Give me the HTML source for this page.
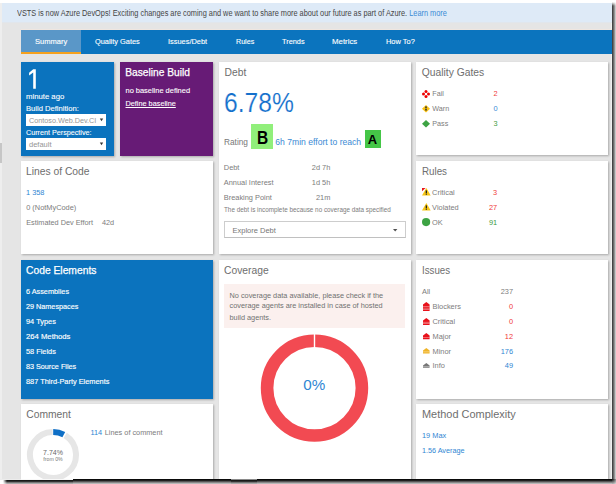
<!DOCTYPE html>
<html><head><meta charset="utf-8">
<style>
*{margin:0;padding:0;box-sizing:border-box}
html,body{width:616px;height:484px;overflow:hidden;background:#fff}
body{position:relative;font-family:"Liberation Sans",sans-serif;color:#555}
.a{position:absolute;white-space:nowrap;line-height:1}
#page{position:absolute;left:0;top:0;width:612px;height:479px;background:#e5e5e5;overflow:hidden}
.card{position:absolute;background:#fff;box-shadow:1px 1px 2px rgba(0,0,0,.26)}
svg{position:absolute;overflow:visible}
</style></head>
<body>
<div id="page">
<div style="position:absolute;left:0px;top:0px;width:612px;height:3px;background:#fff;"></div>
<div style="position:absolute;left:0px;top:3px;width:2px;height:476px;background:#eeeeee;"></div>
<div style="position:absolute;left:0px;top:143px;width:2px;height:20px;background:#c6c6c6;"></div>
<div style="position:absolute;left:611px;top:22px;width:1px;height:457px;background:#efefef;"></div>
<div style="position:absolute;left:2px;top:3px;width:610px;height:19px;background:#deeaf7;"></div>
<div style="position:absolute;left:2px;top:22px;width:610px;height:1px;background:#e1e6ec;"></div>
<div class="a" style="left:16.80px;top:9.49px;font-size:8.4px;color:#454545;transform:scaleX(0.8785);transform-origin:0 0;">VSTS is now Azure DevOps! Exciting changes are coming and we want to share more about our future as part of Azure. <span style="color:#3a8ad6">Learn more</span></div>
<div style="position:absolute;left:21px;top:29px;width:591px;height:1px;background:#efe6e0;"></div>
<div style="position:absolute;left:21px;top:30px;width:591px;height:24px;background:#0b74be;"></div>
<div style="position:absolute;left:21px;top:30px;width:60px;height:22px;background:#5a97c8;"></div>
<div style="position:absolute;left:21px;top:52px;width:60px;height:2px;background:#f5a11e;"></div>
<div class="a" style="left:34.70px;top:37.83px;font-size:8.0px;color:#fff;transform:scaleX(0.9437);transform-origin:0 0;-webkit-text-stroke:0.12px #fff">Summary</div>
<div class="a" style="left:94.70px;top:37.83px;font-size:8.0px;color:#fff;transform:scaleX(0.9244);transform-origin:0 0;-webkit-text-stroke:0.12px #fff">Quality Gates</div>
<div class="a" style="left:168.00px;top:37.83px;font-size:8.0px;color:#fff;transform:scaleX(0.9256);transform-origin:0 0;-webkit-text-stroke:0.12px #fff">Issues/Debt</div>
<div class="a" style="left:235.50px;top:37.83px;font-size:8.0px;color:#fff;transform:scaleX(0.8898);transform-origin:0 0;-webkit-text-stroke:0.12px #fff">Rules</div>
<div class="a" style="left:281.70px;top:37.83px;font-size:8.0px;color:#fff;transform:scaleX(0.9186);transform-origin:0 0;-webkit-text-stroke:0.12px #fff">Trends</div>
<div class="a" style="left:332.30px;top:37.83px;font-size:8.0px;color:#fff;transform:scaleX(0.9815);transform-origin:0 0;-webkit-text-stroke:0.12px #fff">Metrics</div>
<div class="a" style="left:385.50px;top:37.83px;font-size:8.0px;color:#fff;transform:scaleX(0.9296);transform-origin:0 0;-webkit-text-stroke:0.12px #fff">How To?</div>
<div class="card" style="left:21px;top:62px;width:93px;height:94px;background:#0b73be"></div>
<svg style="left:0;top:0" width="120" height="100"><path d="M33.2 69.2 L35.8 69.2 L35.8 88.7 L33.2 88.7 L33.2 72.6 L29.1 75.4 L29.1 72.8 Z" fill="#fff"/></svg>
<div class="a" style="left:26.00px;top:93.11px;font-size:7.9px;color:#fff;transform:scaleX(0.9799);transform-origin:0 0;-webkit-text-stroke:0.1px #fff">minute ago</div>
<div class="a" style="left:26.20px;top:105.48px;font-size:7.7px;color:#fff;transform:scaleX(0.9888);transform-origin:0 0;-webkit-text-stroke:0.1px #fff">Build Definition:</div>
<div style="position:absolute;left:26px;top:114px;width:80px;height:12px;background:#fff;"></div>
<div class="a" style="left:29.00px;top:116.57px;font-size:7.6px;color:#959595;transform:scaleX(0.9536);transform-origin:0 0;">Contoso.Web.Dev.CI</div>
<div class="a" style="left:26.20px;top:129.48px;font-size:7.7px;color:#fff;transform:scaleX(0.9347);transform-origin:0 0;-webkit-text-stroke:0.1px #fff">Current Perspective:</div>
<div style="position:absolute;left:26px;top:138px;width:80px;height:12px;background:#fff;"></div>
<div class="a" style="left:29.00px;top:140.85px;font-size:7.5px;color:#959595;">default</div>
<svg style="left:99px;top:118px" width="5" height="4"><path d="M0.8 0.6 L4.2 0.6 L2.5 3.2Z" fill="#333"/></svg>
<svg style="left:99px;top:142px" width="5" height="4"><path d="M0.8 0.6 L4.2 0.6 L2.5 3.2Z" fill="#333"/></svg>
<div class="card" style="left:120px;top:62px;width:93px;height:94px;background:#671b76"></div>
<div class="a" style="left:125.30px;top:68px;font-size:10.2px;color:#fff;-webkit-text-stroke:0.25px #fff">Baseline Build</div>
<div class="a" style="left:125.50px;top:86.59px;font-size:7.45px;color:#fff;-webkit-text-stroke:0.1px #fff">no baseline defined</div>
<div class="a" style="left:125.50px;top:100.02px;font-size:7.3px;color:#fff;text-decoration:underline;-webkit-text-stroke:0.1px #fff">Define baseline</div>
<div class="card" style="left:219px;top:62px;width:192px;height:192px"></div>
<div class="a" style="left:224.50px;top:68px;font-size:10.3px;color:#6e6e6e;">Debt</div>
<div class="a" style="left:223.80px;top:88.80px;font-size:28px;color:#1470cc;transform:scaleX(0.88);transform-origin:0 0;-webkit-text-stroke:0.2px #fff">6.78%</div>
<div class="a" style="left:224.00px;top:137.57px;font-size:8.3px;color:#777;">Rating</div>
<div style="position:absolute;left:250.5px;top:124px;width:22.5px;height:25px;background:#91ef7b;"></div>
<div class="a" style="left:256.60px;top:128.96px;font-size:18px;color:#000;font-weight:bold;transform:scaleX(0.86);transform-origin:0 0">B</div>
<div class="a" style="left:275.30px;top:137.72px;font-size:8.6px;color:#3b8ad4;">6h 7min effort to reach</div>
<div style="position:absolute;left:365px;top:130px;width:15.5px;height:17.5px;background:#45c647;"></div>
<div class="a" style="left:367.80px;top:132.90px;font-size:13px;color:#000;font-weight:bold">A</div>
<div class="a" style="left:223.80px;top:163.84px;font-size:7.4px;color:#7c7c7c;">Debt</div>
<div class="a" style="right:281.70px;top:163.84px;font-size:7.4px;color:#7c7c7c;">2d 7h</div>
<div class="a" style="left:223.80px;top:179.04px;font-size:7.4px;color:#7c7c7c;">Annual Interest</div>
<div class="a" style="right:281.70px;top:179.04px;font-size:7.4px;color:#7c7c7c;">1d 5h</div>
<div class="a" style="left:223.80px;top:194.24px;font-size:7.4px;color:#7c7c7c;">Breaking Point</div>
<div class="a" style="right:281.70px;top:194.24px;font-size:7.4px;color:#7c7c7c;">21m</div>
<div class="a" style="left:224.00px;top:206.84px;font-size:6.33px;color:#7c7c7c;">The debt is incomplete because no coverage data specified</div>
<div style="position:absolute;left:224px;top:221px;width:182px;height:16.5px;border:1px solid #cdcdcd;border-bottom-color:#c0c0c0;background:#fff"></div>
<div class="a" style="left:232.50px;top:226.85px;font-size:7.5px;color:#777;">Explore Debt</div>
<svg style="left:393px;top:228.5px" width="5" height="3"><path d="M0 0 L4.4 0 L2.2 2.6Z" fill="#505050"/></svg>
<div class="card" style="left:416px;top:62px;width:192px;height:93px"></div>
<div class="a" style="left:421.80px;top:68px;font-size:10.3px;color:#6e6e6e;">Quality Gates</div>
<div class="a" style="left:432.30px;top:90.31px;font-size:7.2px;color:#7c7c7c;">Fail</div>
<div class="a" style="right:114.40px;top:90.14px;font-size:7.4px;color:#f03a3a;">2</div>
<div class="a" style="left:432.30px;top:105.31px;font-size:7.2px;color:#7c7c7c;">Warn</div>
<div class="a" style="right:114.40px;top:105.14px;font-size:7.4px;color:#3a8ad6;">0</div>
<div class="a" style="left:432.30px;top:120.01px;font-size:7.2px;color:#7c7c7c;">Pass</div>
<div class="a" style="right:114.40px;top:119.84px;font-size:7.4px;color:#3c9a3c;">3</div>
<svg style="left:422px;top:89.5px" width="8" height="8"><g fill="#e00"><circle cx="4" cy="1.4" r="1.5"/><circle cx="1.5" cy="4" r="1.5"/><circle cx="6.5" cy="4" r="1.5"/><circle cx="4" cy="6.6" r="1.5"/></g></svg>
<svg style="left:422px;top:104.8px" width="8" height="8"><path d="M4 0 L8 3.7 L4 7.4 L0 3.7Z" fill="#fbc312"/><rect x="3.2" y="1.4" width="1.6" height="2" fill="#333"/><rect x="3.2" y="4" width="1.6" height="1.6" fill="#333"/></svg>
<svg style="left:422px;top:119.6px" width="8" height="8"><path d="M4 0 L8 3.7 L4 7.4 L0 3.7Z" fill="#3da343"/></svg>
<div class="card" style="left:21px;top:161px;width:192px;height:93px"></div>
<div class="a" style="left:26.00px;top:167px;font-size:10.3px;color:#6e6e6e;">Lines of Code</div>
<div class="a" style="left:26.40px;top:188.71px;font-size:7.9px;color:#2f86d3;transform:scaleX(0.9358);transform-origin:0 0;">1 358</div>
<div class="a" style="left:26.20px;top:204.04px;font-size:7.4px;color:#7c7c7c;">0 (NotMyCode)</div>
<div class="a" style="left:26.20px;top:218.82px;font-size:7.3px;color:#7c7c7c;">Estimated Dev Effort</div>
<div class="a" style="left:102.00px;top:218.82px;font-size:7.3px;color:#7c7c7c;">42d</div>
<div class="card" style="left:416px;top:161px;width:192px;height:93px"></div>
<div class="a" style="left:421.80px;top:167px;font-size:10.3px;color:#6e6e6e;transform:scaleX(0.9494);transform-origin:0 0">Rules</div>
<div class="a" style="left:432.10px;top:188.64px;font-size:7.4px;color:#7c7c7c;">Critical</div>
<div class="a" style="right:114.80px;top:188.64px;font-size:7.4px;color:#f03a3a;">3</div>
<div class="a" style="left:432.10px;top:203.74px;font-size:7.4px;color:#7c7c7c;">Violated</div>
<div class="a" style="right:114.80px;top:203.74px;font-size:7.4px;color:#f03a3a;">27</div>
<div class="a" style="left:432.10px;top:218.54px;font-size:7.4px;color:#7c7c7c;">OK</div>
<div class="a" style="right:114.80px;top:218.54px;font-size:7.4px;color:#3c9a3c;">91</div>
<svg style="left:421.6px;top:188.4px" width="9" height="8"><path d="M4.35 0 L8.7 7.6 L0 7.6Z" fill="#f7c614"/><rect x="3.7" y="2.4" width="1.3" height="2.6" fill="#222"/><rect x="3.7" y="5.5" width="1.3" height="1.2" fill="#222"/><path d="M0 0 L3.6 0 L0 3.2Z" fill="#e8161b"/></svg>
<svg style="left:421.6px;top:203.4px" width="9" height="8"><path d="M4.35 0 L8.7 7.6 L0 7.6Z" fill="#f7c614"/><rect x="3.7" y="2.4" width="1.3" height="2.6" fill="#222"/><rect x="3.7" y="5.5" width="1.3" height="1.2" fill="#222"/></svg>
<svg style="left:421.9px;top:218.2px" width="9" height="9"><circle cx="4.1" cy="4.1" r="4.1" fill="#3da343"/></svg>
<div class="card" style="left:21px;top:260px;width:192px;height:139px;background:#0b73be"></div>
<div class="a" style="left:26.00px;top:266px;font-size:10.3px;color:#fff;-webkit-text-stroke:0.25px #fff">Code Elements</div>
<div class="a" style="left:26.10px;top:288.38px;font-size:7.7px;color:#fff;transform:scaleX(0.9501);transform-origin:0 0;-webkit-text-stroke:0.15px #fff">6 Assemblies</div>
<div class="a" style="left:26.10px;top:303.48px;font-size:7.7px;color:#fff;transform:scaleX(0.9418);transform-origin:0 0;-webkit-text-stroke:0.15px #fff">29 Namespaces</div>
<div class="a" style="left:26.10px;top:318.28px;font-size:7.7px;color:#fff;transform:scaleX(0.9612);transform-origin:0 0;-webkit-text-stroke:0.15px #fff">94 Types</div>
<div class="a" style="left:26.10px;top:333.38px;font-size:7.7px;color:#fff;transform:scaleX(0.9996);transform-origin:0 0;-webkit-text-stroke:0.15px #fff">264 Methods</div>
<div class="a" style="left:26.10px;top:348.38px;font-size:7.7px;color:#fff;transform:scaleX(0.9570);transform-origin:0 0;-webkit-text-stroke:0.15px #fff">58 Fields</div>
<div class="a" style="left:26.10px;top:363.28px;font-size:7.7px;color:#fff;transform:scaleX(0.9384);transform-origin:0 0;-webkit-text-stroke:0.15px #fff">83 Source Files</div>
<div class="a" style="left:26.10px;top:378.08px;font-size:7.7px;color:#fff;transform:scaleX(0.9580);transform-origin:0 0;-webkit-text-stroke:0.15px #fff">887 Third-Party Elements</div>
<div class="card" style="left:219px;top:260px;width:192px;height:230px"></div>
<div class="a" style="left:224.00px;top:266px;font-size:10.3px;color:#6e6e6e;">Coverage</div>
<div style="position:absolute;left:224px;top:284px;width:181px;height:44px;background:#fbf0ee;"></div>
<div class="a" style="left:229.50px;top:291.60px;font-size:7.33px;color:#707070;">No coverage data available, please check if the</div>
<div class="a" style="left:229.50px;top:302.40px;font-size:7.33px;color:#707070;">coverage agents are installed in case of hosted</div>
<div class="a" style="left:229.50px;top:313.50px;font-size:7.33px;color:#707070;">build agents.</div>
<svg style="left:0;top:0" width="612" height="479"><circle cx="314.5" cy="388.1" r="47.400000000000006" fill="none" stroke="#f24a52" stroke-width="12.6"/><rect x="313.8" y="333.40000000000003" width="1.4" height="14.1" fill="#fff"/></svg>
<div class="a" style="left:303.20px;top:377.33px;font-size:15.2px;color:#2f86d3;">0%</div>
<div class="card" style="left:416px;top:260px;width:192px;height:139px"></div>
<div class="a" style="left:421.80px;top:266px;font-size:10.3px;color:#6e6e6e;transform:scaleX(0.9440);transform-origin:0 0">Issues</div>
<div class="a" style="left:422.00px;top:287.84px;font-size:7.4px;color:#7c7c7c;">All</div>
<div class="a" style="right:99.00px;top:287.84px;font-size:7.4px;color:#7c7c7c;">237</div>
<div class="a" style="left:432.50px;top:302.54px;font-size:7.4px;color:#7c7c7c;">Blockers</div>
<div class="a" style="right:99.00px;top:302.54px;font-size:7.4px;color:#f03a3a;">0</div>
<div class="a" style="left:432.50px;top:317.74px;font-size:7.4px;color:#7c7c7c;">Critical</div>
<div class="a" style="right:99.00px;top:317.74px;font-size:7.4px;color:#f03a3a;">0</div>
<div class="a" style="left:432.50px;top:332.74px;font-size:7.4px;color:#7c7c7c;">Major</div>
<div class="a" style="right:99.00px;top:332.74px;font-size:7.4px;color:#f03a3a;">12</div>
<div class="a" style="left:432.50px;top:347.54px;font-size:7.4px;color:#7c7c7c;">Minor</div>
<div class="a" style="right:99.00px;top:347.54px;font-size:7.4px;color:#2f86d3;">176</div>
<div class="a" style="left:432.50px;top:362.44px;font-size:7.4px;color:#7c7c7c;">Info</div>
<div class="a" style="right:99.00px;top:362.44px;font-size:7.4px;color:#2f86d3;">49</div>
<svg style="left:422.8px;top:301.9px" width="7" height="8.9"><path d="M3.3 0 L6.6 2.6 L6.6 8.9 L0 8.9 L0 2.6Z" fill="#e8121b"/><rect x="0" y="4.2" width="6.6" height="0.6" fill="#fff" opacity="0.6"/><rect x="0" y="5.8" width="6.6" height="0.6" fill="#fff" opacity="0.6"/><rect x="0" y="7.4" width="6.6" height="0.6" fill="#fff" opacity="0.6"/></svg>
<svg style="left:422.8px;top:317.8px" width="7" height="6.9"><path d="M3.3 0 L6.6 2.6 L6.6 6.9 L0 6.9 L0 2.6Z" fill="#e8121b"/><rect x="0" y="3.9" width="6.6" height="0.6" fill="#fff" opacity="0.6"/><rect x="0" y="5.4" width="6.6" height="0.6" fill="#fff" opacity="0.6"/></svg>
<svg style="left:422.8px;top:332.9px" width="7" height="6.3"><path d="M3.3 0 L6.6 2.6 L6.6 6.3 L0 6.3 L0 2.6Z" fill="#e8121b"/><rect x="0" y="4.3" width="6.6" height="0.6" fill="#fff" opacity="0.6"/></svg>
<svg style="left:422.8px;top:347.8px" width="7" height="5.5"><path d="M3.3 0 L6.6 2.6 L6.6 5.5 L0 5.5 L0 2.6Z" fill="#f0b429"/><rect x="0" y="3.6" width="6.6" height="0.6" fill="#fff" opacity="0.6"/></svg>
<svg style="left:422.8px;top:362.7px" width="7" height="4.7"><path d="M3.3 0 L6.6 2.6 L6.6 4.7 L0 4.7 L0 2.6Z" fill="#777"/><rect x="0" y="3.2" width="6.6" height="0.6" fill="#fff" opacity="0.6"/></svg>
<div class="card" style="left:21px;top:404px;width:192px;height:90px"></div>
<div class="a" style="left:26.30px;top:410px;font-size:10.3px;color:#6e6e6e;">Comment</div>
<svg style="left:0;top:0" width="612" height="479"><path d="M65.19 435.39 A23.0 23.0 0 1 1 52.60 431.90" fill="none" stroke="#e6e6e6" stroke-width="6"/><path d="M53.20 431.90 A23.0 23.0 0 0 1 63.80 434.59" fill="none" stroke="#0f6fc6" stroke-width="6"/></svg>
<div class="a" style="left:53.00px;top:448.77px;font-size:7px;color:#666;transform:translateX(-50%)">7.74%</div>
<div class="a" style="left:53.00px;top:457.40px;font-size:5.2px;color:#777;transform:translateX(-50%)">from 0%</div>
<div class="a" style="left:90.50px;top:428.98px;font-size:7.35px;color:#2f86d3;">114</div>
<div class="a" style="left:104.80px;top:429.00px;font-size:7.32px;color:#7c7c7c;">Lines of comment</div>
<div class="card" style="left:416px;top:404px;width:192px;height:90px"></div>
<div class="a" style="left:421.80px;top:410px;font-size:10.3px;color:#6e6e6e;transform:scaleX(1.0629);transform-origin:0 0">Method Complexity</div>
<div class="a" style="left:422.00px;top:431.87px;font-size:7.6px;color:#2f86d3;transform:scaleX(0.9750);transform-origin:0 0;">19 Max</div>
<div class="a" style="left:422.00px;top:446.77px;font-size:7.6px;color:#2f86d3;transform:scaleX(0.9518);transform-origin:0 0;">1.56 Average</div>
</div>
<div style="position:absolute;left:612px;top:6px;width:1px;height:473px;background:#444"></div>
<div style="position:absolute;left:612px;top:2px;width:1px;height:4px;background:linear-gradient(to bottom,#fff,#444)"></div>
<div style="position:absolute;left:613px;top:6px;width:1px;height:473px;background:#6a6a6a"></div>
<div style="position:absolute;left:613px;top:2px;width:1px;height:4px;background:linear-gradient(to bottom,#fff,#6a6a6a)"></div>
<div style="position:absolute;left:614px;top:6px;width:1px;height:473px;background:#959595"></div>
<div style="position:absolute;left:614px;top:2px;width:1px;height:4px;background:linear-gradient(to bottom,#fff,#959595)"></div>
<div style="position:absolute;left:615px;top:6px;width:1px;height:473px;background:#c8c8c8"></div>
<div style="position:absolute;left:615px;top:2px;width:1px;height:4px;background:linear-gradient(to bottom,#fff,#c8c8c8)"></div>
<div style="position:absolute;left:73px;top:479px;width:539px;height:1px;background:#0a0a0a"></div>
<div style="position:absolute;left:73px;top:480px;width:539px;height:1px;background:#202020"></div>
<div style="position:absolute;left:73px;top:481px;width:539px;height:1px;background:#555"></div>
<div style="position:absolute;left:73px;top:482px;width:539px;height:1px;background:#888"></div>
<div style="position:absolute;left:73px;top:483px;width:539px;height:1px;background:#b8b8b8"></div>
<div style="position:absolute;left:3px;top:480px;width:70px;height:1px;background:linear-gradient(to right,#fff,#1a1a1a 4px)"></div>
<div style="position:absolute;left:3px;top:481px;width:70px;height:1px;background:linear-gradient(to right,#fff,#333 4px)"></div>
<div style="position:absolute;left:3px;top:482px;width:70px;height:1px;background:linear-gradient(to right,#fff,#777 4px)"></div>
<div style="position:absolute;left:3px;top:483px;width:70px;height:1px;background:linear-gradient(to right,#fff,#aaa 4px)"></div>
<div style="position:absolute;left:231px;top:480px;width:26px;height:1px;background:#1a1a1a"></div>
<div style="position:absolute;left:231px;top:481px;width:26px;height:1px;background:#333"></div>
<div style="position:absolute;left:231px;top:482px;width:26px;height:1px;background:#777"></div>
<div style="position:absolute;left:231px;top:483px;width:26px;height:1px;background:#aaa"></div>
<div style="position:absolute;left:231px;top:479px;width:26px;height:1px;background:#8a8a8a"></div>
<div style="position:absolute;left:0;top:479px;width:21px;height:1px;background:#ececec"></div><div style="position:absolute;left:21px;top:479px;width:52px;height:1px;background:#f8f8f8"></div>
<div style="position:absolute;left:612px;top:479px;width:4px;height:5px;background:radial-gradient(circle at 0 0,#111 0,#3a3a3a 1.5px,#777 3px,#aaa 4.5px,#d8d8d8 6px)"></div>
</body></html>
